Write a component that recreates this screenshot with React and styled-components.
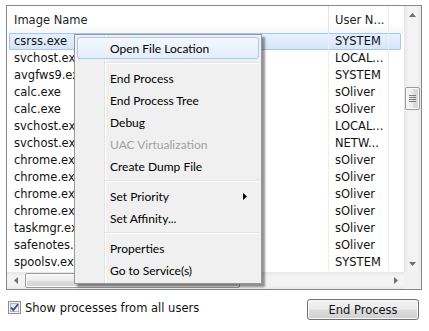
import React from 'react';
import styled, { createGlobalStyle } from 'styled-components';

const GlobalStyle = createGlobalStyle`
  html, body {
    margin: 0;
    padding: 0;
    background: #ffffff;
  }
  body {
    font-family: "DejaVu Sans", Verdana, sans-serif;
    font-size: 11.5px;
    color: #111;
  }
`;

const processes = [
  { name: 'csrss.exe', user: 'SYSTEM', selected: true },
  { name: 'svchost.exe', user: 'LOCAL...' },
  { name: 'avgfws9.exe', user: 'SYSTEM' },
  { name: 'calc.exe', user: 'sOliver' },
  { name: 'calc.exe', user: 'sOliver' },
  { name: 'svchost.exe', user: 'LOCAL...' },
  { name: 'svchost.exe', user: 'NETW...' },
  { name: 'chrome.exe', user: 'sOliver' },
  { name: 'chrome.exe', user: 'sOliver' },
  { name: 'chrome.exe', user: 'sOliver' },
  { name: 'chrome.exe', user: 'sOliver' },
  { name: 'taskmgr.exe', user: 'sOliver' },
  { name: 'safenotes.exe', user: 'sOliver' },
  { name: 'spoolsv.exe', user: 'SYSTEM' },
];

const menuGroups = [
  [{ label: 'Open File Location', hot: true }],
  [
    { label: 'End Process' },
    { label: 'End Process Tree' },
    { label: 'Debug' },
    { label: 'UAC Virtualization', disabled: true },
    { label: 'Create Dump File' },
  ],
  [{ label: 'Set Priority', submenu: true }, { label: 'Set Affinity...' }],
  [{ label: 'Properties' }, { label: 'Go to Service(s)' }],
];

const Page = styled.div`
  position: relative;
  width: 429px;
  height: 331px;
  box-sizing: border-box;
  padding: 5px 7px 0 6px;
`;

const ListBox = styled.div`
  display: grid;
  grid-template-columns: 1fr 17px;
  grid-template-rows: 1fr 17px;
  width: 416px;
  height: 285px;
  box-sizing: border-box;
  border: 1px solid #828790;
  background: #fff;
`;

const Viewport = styled.div`
  overflow: hidden;
  white-space: nowrap;
`;

const Header = styled.div`
  display: grid;
  grid-template-columns: 319px 61px 1fr;
  height: 27px;
  margin-left: 2px;
  background: linear-gradient(#ffffff 0%, #ffffff 60%, #f6f7f9 100%);
  color: #222;
`;

const HeaderCell = styled.div`
  display: flex;
  align-items: center;
  padding-left: ${p => (p.divided ? '6px' : '5px')};
  border-left: ${p => (p.divided ? '1px solid #dfe2e6' : 'none')};
  border-right: ${p => (p.divided ? '1px solid #eceef0' : 'none')};
`;

const Row = styled.div`
  display: grid;
  grid-template-columns: 319px 61px 1fr;
  height: 17px;
  margin: 0 3px 0 2px;
  border-radius: 2px;
  background: ${p =>
    p.selected ? 'linear-gradient(#e9f2fd, #d3e5fa)' : 'transparent'};
  box-shadow: ${p => (p.selected ? 'inset 0 0 0 1px #a5c7ef' : 'none')};
`;

const NameCell = styled.div`
  padding-left: 5px;
  line-height: 17px;
  overflow: hidden;
`;

const UserCell = styled.div`
  padding-left: 6px;
  line-height: 17px;
  border-left: 1px solid #eeeeee;
  border-right: 1px solid #eeeeee;
  overflow: hidden;
`;

const VScroll = styled.div`
  display: flex;
  flex-direction: column;
  background: linear-gradient(to right, #e6e6e6 0%, #f3f3f3 25%, #f3f3f3 75%, #e9e9e9 100%);
`;

const HScroll = styled.div`
  display: flex;
  align-items: stretch;
  background: linear-gradient(#e6e6e6 0%, #f3f3f3 25%, #f3f3f3 75%, #e9e9e9 100%);
`;

const Corner = styled.div`
  background: #f0f0f0;
`;

const ArrowButton = styled.div`
  flex: 0 0 17px;
  display: flex;
  align-items: center;
  justify-content: center;
  height: 17px;
  width: 17px;
`;

const Track = styled.div`
  flex: 1;
  display: flex;
  flex-direction: ${p => (p.vertical ? 'column' : 'row')};
`;

const Thumb = styled.div`
  box-sizing: border-box;
  border: 1px solid #9a9a9a;
  border-radius: 2px;
  display: flex;
  align-items: center;
  justify-content: center;
  ${p =>
    p.vertical
      ? `
    width: 15px;
    margin-left: 1px;
    background: linear-gradient(to right, #f6f6f6 0%, #ececec 50%, #dcdcdc 51%, #d6d6d6 100%);
  `
      : `
    height: 15px;
    margin-top: 1px;
    background: linear-gradient(#f6f6f6 0%, #ececec 50%, #dcdcdc 51%, #d6d6d6 100%);
  `}
  box-shadow: inset 0 0 0 1px #fbfbfb;
`;

const Arrow = ({ dir }) => {
  const pts = {
    up: '0,4 7,4 3.5,0',
    down: '0,0 7,0 3.5,4',
    left: '4,0 4,7 0,3.5',
    right: '0,0 0,7 4,3.5',
  }[dir];
  const vert = dir === 'up' || dir === 'down';
  return (
    <svg width={vert ? 7 : 4} height={vert ? 4 : 7} viewBox={vert ? '0 0 7 4' : '0 0 4 7'}>
      <polygon points={pts} fill="#6f6f6f" />
    </svg>
  );
};

const Grip = () => (
  <svg width="7" height="7" viewBox="0 0 7 7">
    {[0.5, 2.5, 4.5, 6.5].map(y => (
      <line key={y} x1="0" y1={y} x2="7" y2={y} stroke="#7e7e7e" strokeWidth="1" />
    ))}
  </svg>
);

const Footer = styled.div`
  display: flex;
  justify-content: space-between;
  align-items: flex-start;
  margin-top: 9px;
  padding: 0 3px 0 2px;
`;

const CheckLabel = styled.label`
  display: flex;
  align-items: center;
  gap: 4px;
  height: 17px;
  color: #111;
`;

const Button = styled.button`
  width: 112px;
  height: 21px;
  padding: 0;
  border: 1px solid #707070;
  border-radius: 3px;
  background: linear-gradient(#f2f2f2 0%, #ebebeb 48%, #dddddd 52%, #cfcfcf 100%);
  box-shadow: inset 0 0 0 1px #fbfbfb;
  font-family: "DejaVu Sans", Verdana, sans-serif;
  font-size: 11.5px;
  color: #111;
`;

const Menu = styled.div`
  position: absolute;
  left: 74px;
  top: 34px;
  width: 188px;
  box-sizing: border-box;
  padding: 2px;
  border: 1px solid #979797;
  background:
    linear-gradient(to right, transparent 29px, #e2e3e3 29px, #e2e3e3 30px, #ffffff 30px, #ffffff 31px, transparent 31px),
    #f0f0f0;
  box-shadow: 3px 3px 2px rgba(0, 0, 0, 0.42);
  font-family: Lato, "Open Sans", sans-serif;
  font-size: 12px;
`;

const MenuItem = styled.div`
  display: flex;
  align-items: center;
  justify-content: space-between;
  height: 22px;
  box-sizing: border-box;
  padding: 0 11px 0 32px;
  border-radius: 3px;
  color: ${p => (p.disabled ? '#a0a0a0' : '#000')};
  border: 1px solid ${p => (p.hot ? '#a8caf0' : 'transparent')};
  background: ${p => (p.hot ? 'linear-gradient(#f4f8fd, #e3edfa)' : 'transparent')};
`;

const Separator = styled.div`
  height: 8px;
  display: flex;
  flex-direction: column;
  justify-content: center;
  margin-left: 28px;

  &::before {
    content: '';
    height: 1px;
    background: #e2e3e3;
  }
  &::after {
    content: '';
    height: 1px;
    background: #ffffff;
  }
`;

const SubArrow = () => (
  <svg width="4" height="7" viewBox="0 0 4 7">
    <polygon points="0,0 0,7 4,3.5" fill="#000" />
  </svg>
);

const CheckBox = () => (
  <svg width="13" height="13" viewBox="0 0 13 13">
    <defs>
      <linearGradient id="cbfill" x1="0" y1="0" x2="1" y2="1">
        <stop offset="0" stopColor="#dcdcdc" />
        <stop offset="1" stopColor="#fbfbfb" />
      </linearGradient>
    </defs>
    <rect x="0.5" y="0.5" width="12" height="12" fill="#f4f4f4" stroke="#8e8f8f" />
    <rect x="2.5" y="2.5" width="8" height="8" fill="url(#cbfill)" stroke="#b5b6b6" />
    <path d="M3 6.5 L5.3 9 L10 3.2" fill="none" stroke="#2c4e91" strokeWidth="1.8" />
  </svg>
);

export default function App() {
  return (
    <>
      <GlobalStyle />
      <Page>
        <ListBox>
          <Viewport>
            <Header>
              <HeaderCell>Image Name</HeaderCell>
              <HeaderCell divided>User N...</HeaderCell>
              <div />
            </Header>
            {processes.map((p, i) => (
              <Row key={i} selected={p.selected}>
                <NameCell>{p.name}</NameCell>
                <UserCell>{p.user}</UserCell>
                <div />
              </Row>
            ))}
          </Viewport>
          <VScroll>
            <ArrowButton><Arrow dir="up" /></ArrowButton>
            <Track vertical>
              <Thumb vertical style={{ marginTop: 64, height: 23 }}>
                <Grip />
              </Thumb>
            </Track>
            <ArrowButton><Arrow dir="down" /></ArrowButton>
          </VScroll>
          <HScroll>
            <ArrowButton><Arrow dir="left" /></ArrowButton>
            <Track>
              <Thumb style={{ marginLeft: 1, width: 215 }} />
            </Track>
            <ArrowButton><Arrow dir="right" /></ArrowButton>
          </HScroll>
          <Corner />
        </ListBox>
        <Footer>
          <CheckLabel>
            <CheckBox />
            Show processes from all users
          </CheckLabel>
          <Button>End Process</Button>
        </Footer>
        <Menu>
          {menuGroups.map((group, gi) => (
            <React.Fragment key={gi}>
              {gi > 0 && <Separator />}
              {group.map(item => (
                <MenuItem key={item.label} hot={item.hot} disabled={item.disabled}>
                  <span>{item.label}</span>
                  {item.submenu && <SubArrow />}
                </MenuItem>
              ))}
            </React.Fragment>
          ))}
        </Menu>
      </Page>
    </>
  );
}
